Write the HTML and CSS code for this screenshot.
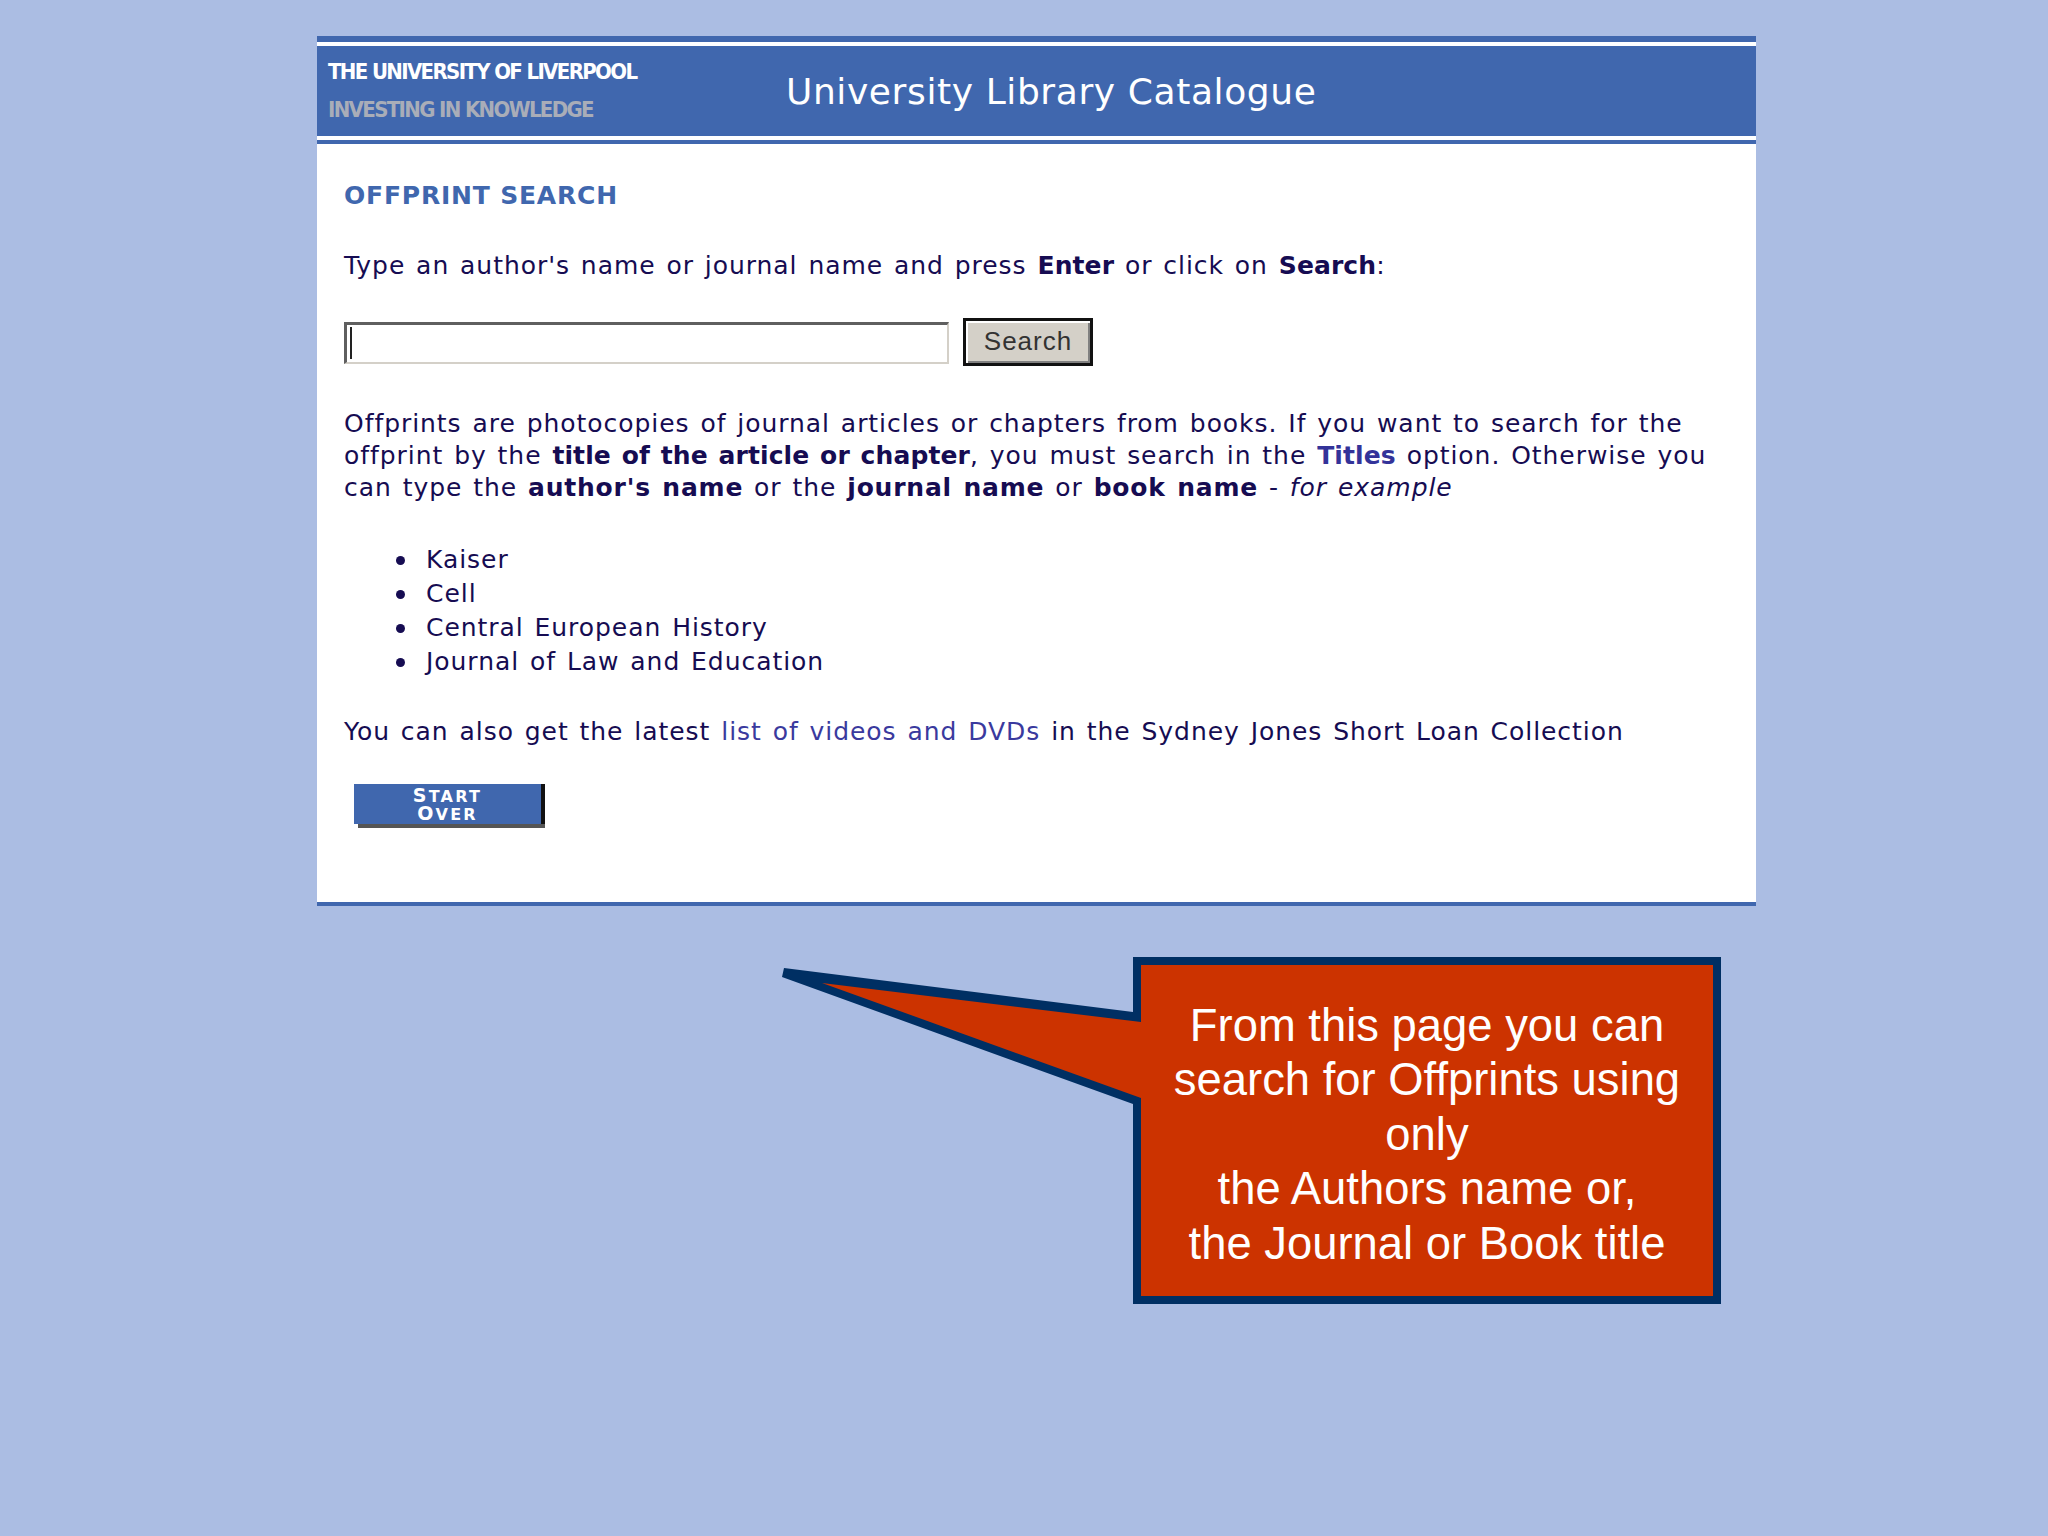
FILE: index.html
```html
<!DOCTYPE html>
<html lang="en">
<head>
    <meta charset="UTF-8">
    <title>University Library Catalogue</title>
    <link rel="stylesheet" href="styles.css">
</head>
<body>
    <div class="panel">
        <div class="masthead">
            <div class="masthead-inner">
                <div class="brand">
                    <div class="brand-name">THE UNIVERSITY OF LIVERPOOL</div>
                    <div class="brand-tag">INVESTING IN KNOWLEDGE</div>
                </div>
                <div class="masthead-title">University Library Catalogue</div>
            </div>
        </div>

        <div class="content">
            <h1>OFFPRINT SEARCH</h1>
            <p class="intro">Type an author's name or journal name and press <b>Enter</b> or click on <b>Search</b>:</p>

            <form class="search-row">
                <div class="search-input"><span class="caret"></span></div>
                <button type="button" class="search-button">Search</button>
            </form>

            <p class="explain">Offprints are photocopies of journal articles or chapters from books. If you want to search for the<br>
            offprint by the <b>title of the article or chapter</b>, you must search in the <b class="titles">Titles</b> option. Otherwise you<br>
            can type the <b class="term">author's name</b> or the <b class="term">journal name</b> or <b class="term">book name</b> - <i>for example</i></p>

            <ul class="examples">
                <li>Kaiser</li>
                <li>Cell</li>
                <li>Central European History</li>
                <li>Journal of Law and Education</li>
            </ul>

            <p class="videos">You can also get the latest <a href="#">list of videos and DVDs</a> in the Sydney Jones Short Loan Collection</p>

            <a class="start-over" href="#"><span class="cap">S</span>TART<br><span class="cap">O</span>VER</a>
        </div>
    </div>

    <!-- callout sits on the slide, over the page screenshot -->
    <div class="callout">
        <svg class="callout-shape" width="939" height="347" viewBox="782 957 939 347">
            <polygon fill="#002f63" points="1133,957 1721,957 1721,1304 1133,1304 1133,1104 782,977 784,968 1133,1012"/>
            <polygon fill="#cc3300" points="1141,965 1713,965 1713,1296 1141,1296 1141,1098 822,983 1141,1022"/>
        </svg>
        <div class="callout-text">From this page you can<br>search for Offprints using<br>only<br>the Authors name or,<br>the Journal or Book title</div>
    </div>
</body>
</html>
```

FILE: styles.css
```css
body {
    margin: 0;
    height: 1536px;
    overflow: hidden;
    position: relative;
    background-color: #abbde3;
    font-family: "DejaVu Sans", sans-serif;
    color: #160c52;
}

.panel {
    width: 1439px;
    margin: 36px 0 0 317px;
    background-color: #fff;
    border-bottom: 4px solid #4067ae;
}

.masthead {
    border-top: 6px solid #4067ae;
    border-bottom: 4px solid #4067ae;
}

.masthead-inner {
    display: flex;
    align-items: center;
    height: 90px;
    padding-left: 11px;
    background-color: #4067ae;
    border-top: 4px solid #fff;
    border-bottom: 4px solid #fff;
}

.brand {
    width: 458px;
    font-family: "DejaVu Sans Condensed", "DejaVu Sans", sans-serif;
    font-weight: bold;
    font-size: 22px;
    letter-spacing: -1.65px;
    line-height: 38px;
}

.brand-name {
    color: #fff;
}

.brand-tag {
    color: #a9adb8;
}

.masthead-title {
    color: #fff;
    font-size: 36px;
    letter-spacing: 0.6px;
}

.content {
    padding: 36px 27px 0;
    height: 758px;
    box-sizing: border-box;
    font-size: 25px;
    line-height: 32px;
    letter-spacing: 0.95px;
    word-spacing: 2px;
}

.content b {
    letter-spacing: 0.1px;
}

.content .term {
    letter-spacing: 0.8px;
}

h1 {
    margin: 0;
    font-size: 25px;
    line-height: 32px;
    letter-spacing: 0.8px;
    word-spacing: 0;
    color: #4067ae;
}

p {
    margin: 0;
}

.intro {
    margin-top: 38px;
}

.search-row {
    display: flex;
    align-items: center;
    gap: 14px;
    margin-top: 36px;
}

.search-input {
    width: 605px;
    height: 42px;
    margin-top: 2px;
    box-sizing: border-box;
    padding: 2px 3px;
    background-color: #fff;
    border: 2px solid;
    border-top-width: 3px;
    border-left-width: 3px;
    border-color: #5f5f5f #d4d0c8 #d4d0c8 #5f5f5f;
}

.caret {
    display: block;
    width: 2px;
    height: 32px;
    background-color: #222;
}

.search-button {
    width: 130px;
    height: 48px;
    padding: 0 0 2px;
    background-color: #d4d0c8;
    border: 3px solid #111;
    box-shadow: inset 2px 2px 0 #fff, inset -2px -2px 0 #808080;
    font-family: "Liberation Sans", sans-serif;
    font-size: 26px;
    letter-spacing: 1px;
    color: #333;
}

.explain {
    margin-top: 42px;
}

.titles {
    color: #333399;
}

.examples {
    margin: 39px 0 0;
    padding-left: 82px;
    list-style: none;
    line-height: 34px;
}

.examples li {
    display: flex;
    align-items: center;
}

.examples li::before {
    content: "";
    width: 9px;
    height: 9px;
    margin-left: -30px;
    margin-right: 21px;
    border-radius: 50%;
    background-color: #160c52;
}

.videos {
    margin-top: 37px;
}

.videos a {
    color: #3a3a9e;
    text-decoration: none;
}

.start-over {
    display: block;
    width: 187px;
    height: 40px;
    margin: 36px 0 0 10px;
    background-color: #4067ae;
    box-shadow: 4px 0 0 #111, 4px 4px 0 #555;
    color: #fff;
    font-size: 16px;
    letter-spacing: 2.2px;
    word-spacing: 0;
    font-weight: bold;
    line-height: 16px;
    text-align: center;
    text-decoration: none;
    padding-top: 3px;
    box-sizing: border-box;
}

.cap {
    font-size: 19px;
}

.callout {
    position: absolute;
    left: 782px;
    top: 957px;
    width: 939px;
    height: 347px;
}

.callout-shape {
    position: absolute;
    left: 0;
    top: 0;
}

.callout-text {
    position: absolute;
    left: 351px;
    top: 42px;
    width: 588px;
    text-align: center;
    font-family: "Liberation Sans", sans-serif;
    font-size: 45.4px;
    line-height: 54.4px;
    color: #fff;
}
```
